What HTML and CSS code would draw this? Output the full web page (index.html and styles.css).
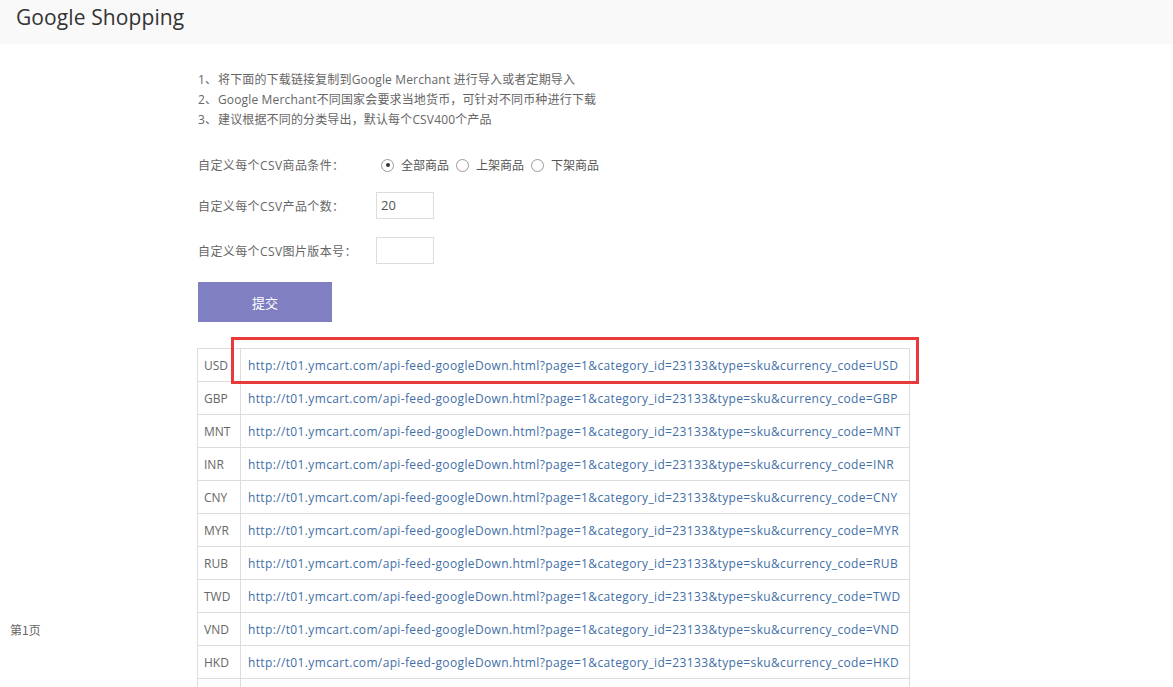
FILE: index.html
```html
<!DOCTYPE html>
<html lang="zh-CN">
<head>
<meta charset="utf-8">
<title>Google Shopping</title>
<link rel="stylesheet" href="styles.css">
</head>
<body>
<header class="topbar"><h1 class="title">Google Shopping</h1></header>
<div class="layout">
  <aside class="side"><span class="pager">第1页</span></aside>
  <main class="main">
    <ol class="tips">
      <li><span class="num">1、</span>将下面的下载链接复制到Google Merchant 进行导入或者定期导入</li>
      <li><span class="num">2、</span>Google Merchant不同国家会要求当地货币，可针对不同币种进行下载</li>
      <li><span class="num">3、</span>建议根据不同的分类导出，默认每个CSV400个产品</li>
    </ol>
    <form class="form">
      <div class="row row-radio">
        <span class="label">自定义每个CSV商品条件：</span>
        <label class="opt"><span class="radio checked"></span>全部商品</label>
        <label class="opt"><span class="radio"></span>上架商品</label>
        <label class="opt"><span class="radio"></span>下架商品</label>
      </div>
      <div class="row row-input">
        <span class="label">自定义每个CSV产品个数：</span>
        <span class="input">20</span>
      </div>
      <div class="row row-input2">
        <span class="label">自定义每个CSV图片版本号：</span>
        <span class="input"></span>
      </div>
      <div class="btn">提交</div>
    </form>
    <div class="table-wrap">
      <table class="links">
        <tr><td class="cur">USD</td><td class="url"><a>http://t01.ymcart.com/api-feed-googleDown.html?page=1&amp;category_id=23133&amp;type=sku&amp;currency_code=USD</a></td></tr>
        <tr><td class="cur">GBP</td><td class="url"><a>http://t01.ymcart.com/api-feed-googleDown.html?page=1&amp;category_id=23133&amp;type=sku&amp;currency_code=GBP</a></td></tr>
        <tr><td class="cur">MNT</td><td class="url"><a>http://t01.ymcart.com/api-feed-googleDown.html?page=1&amp;category_id=23133&amp;type=sku&amp;currency_code=MNT</a></td></tr>
        <tr><td class="cur">INR</td><td class="url"><a>http://t01.ymcart.com/api-feed-googleDown.html?page=1&amp;category_id=23133&amp;type=sku&amp;currency_code=INR</a></td></tr>
        <tr><td class="cur">CNY</td><td class="url"><a>http://t01.ymcart.com/api-feed-googleDown.html?page=1&amp;category_id=23133&amp;type=sku&amp;currency_code=CNY</a></td></tr>
        <tr><td class="cur">MYR</td><td class="url"><a>http://t01.ymcart.com/api-feed-googleDown.html?page=1&amp;category_id=23133&amp;type=sku&amp;currency_code=MYR</a></td></tr>
        <tr><td class="cur">RUB</td><td class="url"><a>http://t01.ymcart.com/api-feed-googleDown.html?page=1&amp;category_id=23133&amp;type=sku&amp;currency_code=RUB</a></td></tr>
        <tr><td class="cur">TWD</td><td class="url"><a>http://t01.ymcart.com/api-feed-googleDown.html?page=1&amp;category_id=23133&amp;type=sku&amp;currency_code=TWD</a></td></tr>
        <tr><td class="cur">VND</td><td class="url"><a>http://t01.ymcart.com/api-feed-googleDown.html?page=1&amp;category_id=23133&amp;type=sku&amp;currency_code=VND</a></td></tr>
        <tr><td class="cur">HKD</td><td class="url"><a>http://t01.ymcart.com/api-feed-googleDown.html?page=1&amp;category_id=23133&amp;type=sku&amp;currency_code=HKD</a></td></tr>
        <tr class="last"><td class="cur"></td><td class="url"></td></tr>
      </table>
      <div class="highlight"></div>
    </div>
  </main>
</div>
</body>
</html>
```
FILE: styles.css
```css
html, body {
  margin: 0;
  padding: 0;
  background: #fff;
  overflow: hidden;
}
body {
  font-family: "Open Sans", "Noto Sans CJK SC", sans-serif;
  font-size: 12px;
  color: #666;
}
.topbar {
  height: 44px;
  background: #f9f9f9;
  display: flex;
  align-items: center;
  padding-left: 16px;
}
.title {
  margin: 0;
  font-family: "Open Sans", "Noto Sans CJK SC", sans-serif;
  font-weight: 400;
  font-size: 21px;
  color: #333;
  letter-spacing: 0.1px;
  padding-bottom: 10px;
}
.layout {
  display: grid;
  grid-template-columns: 197px 1fr;
}
.side {
  padding: 577px 0 0 10px;
}
.pager {
  font-family: "Noto Sans CJK SC", sans-serif;
  font-size: 12px;
  color: #666;
}
.main {
  padding-top: 26px;
}
.tips {
  list-style: none;
  margin: 0 0 0 1px;
  padding: 0;
  font-family: "Open Sans", "Noto Sans CJK SC", sans-serif;
  line-height: 20px;
  font-size: 12px;
  letter-spacing: 0.15px;
}
.tips .num {
  display: inline-block;
  width: 20px;
}
.form {
  margin: 23px 0 0 1px;
}
.row {
  display: flex;
  align-items: center;
}
.label {
  width: 178px;
  font-family: "Open Sans", "Noto Sans CJK SC", sans-serif;
  letter-spacing: 0.4px;
}
.row-radio {
  height: 24px;
}
.row-radio .label {
  width: 183px;
}
.opt {
  display: flex;
  align-items: center;
  margin-right: 7px;
  color: #555;
}
.radio {
  width: 11px;
  height: 11px;
  border: 1px solid #999;
  border-radius: 50%;
  margin-right: 7px;
  display: flex;
  align-items: center;
  justify-content: center;
}
.radio.checked::after {
  content: "";
  width: 4px;
  height: 4px;
  border-radius: 50%;
  background: #333;
}
.row-input {
  margin-top: 15px;
}
.row-input2 {
  margin-top: 18px;
}
.input {
  box-sizing: border-box;
  width: 58px;
  height: 27px;
  border: 1px solid #ddd;
  padding: 0 4px;
  line-height: 25px;
  font-size: 13px;
  color: #555;
}
.btn {
  margin-top: 18px;
  width: 134px;
  height: 40px;
  background: #7f7fc1;
  color: #fff;
  font-size: 13px;
  display: flex;
  align-items: center;
  justify-content: center;
  font-family: "Noto Sans CJK SC", sans-serif;
}
.table-wrap {
  position: relative;
  margin-top: 26px;
  width: 713px;
}
.links {
  border-collapse: collapse;
  width: 713px;
  table-layout: fixed;
}
.links td {
  border: 1px solid #ddd;
  height: 32px;
  padding: 0;
  font-size: 12px;
  white-space: nowrap;
}
.links .cur {
  width: 36px;
  padding-left: 6px;
  text-align: left;
  color: #666;
}
.links .url {
  padding-left: 7px;
  letter-spacing: 0.36px;
}
.links a {
  color: #3f6fa6;
}
.highlight {
  position: absolute;
  left: 34px;
  top: -11px;
  width: 682px;
  height: 41px;
  border: 3px solid #e8393b;
  pointer-events: none;
}
```
